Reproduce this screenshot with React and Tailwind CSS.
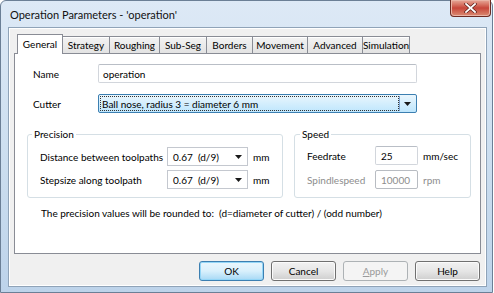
import React from 'react';

const tabs = [
  { label: 'General', w: 'w-[46px]' },
  { label: 'Strategy', w: 'w-[48px]' },
  { label: 'Roughing', w: 'w-[51px]' },
  { label: 'Sub-Seg', w: 'w-[48px]' },
  { label: 'Borders', w: 'w-[47px]' },
  { label: 'Movement', w: 'w-[56px]' },
  { label: 'Advanced', w: 'w-[56px]' },
  { label: 'Simulation', w: 'w-[48px]' },
];

const Arrow = () => (
  <svg width="7" height="4" viewBox="0 0 7 4" className="shrink-0">
    <path d="M0 0h7L3.5 4z" fill="#1a1a1a" />
  </svg>
);

const Combo = ({ value }) => (
  <div className="flex h-[19px] w-[81px] items-center justify-between border border-[#c4c8cf] bg-white pl-[5px] pr-[5px]">
    <span className="whitespace-pre">{value}</span>
    <Arrow />
  </div>
);

const Button = ({ children, primary, disabled }) => {
  if (disabled) {
    return (
      <div className="flex h-[20px] w-[65px] items-center justify-center rounded-[3px] border border-[#adb2b5] bg-[#f4f4f4] text-[#9a9a9a]">
        <span><span className="underline">A</span>pply</span>
      </div>
    );
  }
  return (
    <div
      className={
        'flex h-[20px] w-[65px] items-center justify-center rounded-[3px] border ' +
        (primary
          ? 'border-[#3c7fb1] bg-gradient-to-b from-[#eaf6fd] via-[#d9f0fc] to-[#a7d9f5] shadow-[inset_0_0_0_1px_#94d6f7]'
          : 'border-[#707070] bg-gradient-to-b from-[#f2f2f2] via-[#e6e6e6] to-[#cfcfcf] shadow-[inset_0_0_0_1px_#fbfbfb]')
      }
    >
      {children}
    </div>
  );
};

export default function App() {
  return (
    <div className="h-[293px] w-[494px] whitespace-nowrap bg-white font-['Lato',sans-serif] text-[10px] leading-[12px] text-black">
      <div className="flex h-[293px] w-[493px] flex-col rounded-t-[6px] border border-[#6b7f96] bg-gradient-to-b from-[#dde9f6] via-[#cddff0] to-[#bdd3ea] pb-[5px] pl-[7px] pr-[5px]">
        {/* title bar */}
        <div className="flex h-[26px] shrink-0 items-start justify-between">
          <div className="pl-[2px] pt-[7px] text-[11px] leading-[13px] text-[#111]">
            Operation Parameters - 'operation'
          </div>
          <div className="-mr-[4px] -mt-px flex h-[17px] w-[41px] items-center justify-center rounded-b-[4px] border border-t-0 border-[#6d2a22] bg-gradient-to-b from-[#e6a99a] via-[#c7453a] to-[#d98a72] shadow-[inset_0_0_0_1px_#eab4a6]">
            <svg width="13" height="10" viewBox="0 0 13 10">
              <path d="M2 1l9 8M11 1l-9 8" stroke="#5a1e18" strokeWidth="3.2" strokeLinecap="square" />
              <path d="M2 1l9 8M11 1l-9 8" stroke="#ffffff" strokeWidth="1.8" strokeLinecap="square" />
            </svg>
          </div>
        </div>

        {/* client */}
        <div className="flex flex-1 flex-col border border-[#8fa3b8] bg-[#f0f0f0] pl-[5px] pr-[6px] pt-[5px] shadow-[inset_0_0_0_1px_#ffffff]">
          {/* tabs */}
          <div className="flex h-[20px] items-end pl-[3px]">
            {tabs.map((t, i) =>
              i === 0 ? (
                <div
                  key={t.label}
                  className={`relative z-10 -mb-px flex h-[20px] ${t.w} items-center justify-center border border-b-0 border-[#898c95] bg-white pb-[1px]`}
                >
                  {t.label}
                </div>
              ) : (
                <div
                  key={t.label}
                  className={`-ml-px flex h-[17px] ${t.w} items-center justify-center border border-b-0 border-[#898c95] bg-gradient-to-b from-[#f3f3f3] to-[#e3e3e3] shadow-[inset_0_1px_0_#ffffff]`}
                >
                  {t.label}
                </div>
              )
            )}
          </div>

          {/* panel */}
          <div className="h-[201px] w-[467px] border border-[#898c95] bg-white pt-[10px]">
            <div className="flex h-[19px] items-center">
              <div className="w-[83px] pl-[18px]">Name</div>
              <div className="flex h-[19px] w-[319px] items-center rounded-[2px] border border-[#d2d6dc] border-t-[#b9bec6] pl-[4px]">
                operation
              </div>
            </div>
            <div className="mt-[11px] flex h-[19px] items-center">
              <div className="w-[83px] pl-[18px]">Cutter</div>
              <div className="flex h-[19px] w-[319px] items-stretch rounded-[2px] border border-[#3c7fb1] bg-gradient-to-b from-[#eaf6fd] to-[#bee6fd] p-[1px]">
                <div className="flex flex-1 items-center border border-dotted border-[#333] pl-[1px]">
                  Ball nose, radius 3 = diameter 6 mm
                </div>
                <div className="flex w-[16px] items-center justify-center border-l border-[#7da2ce]">
                  <Arrow />
                </div>
              </div>
            </div>

            <div className="mt-[15px] flex gap-[11px] pl-[12px]">
              <fieldset className="h-[70px] w-[256px] rounded-[3px] border border-[#d5dfe5]">
                <legend className="ml-[4px] px-[2px]">Precision</legend>
                <div className="mt-[7px] flex h-[19px] items-center pl-[12px]">
                  <div className="w-[127px]">Distance between toolpaths</div>
                  <Combo value="0.67  (d/9)" />
                  <div className="pl-[5px]">mm</div>
                </div>
                <div className="mt-[4px] flex h-[19px] items-center pl-[12px]">
                  <div className="w-[127px]">Stepsize along toolpath</div>
                  <Combo value="0.67  (d/9)" />
                  <div className="pl-[5px]">mm</div>
                </div>
              </fieldset>
              <fieldset className="h-[70px] w-[177px] rounded-[3px] border border-[#d5dfe5]">
                <legend className="ml-[5px] px-[2px]">Speed</legend>
                <div className="mt-[6px] flex h-[19px] items-center pl-[12px]">
                  <div className="w-[68px]">Feedrate</div>
                  <div className="flex h-[19px] w-[43px] items-center rounded-[2px] border border-[#d2d6dc] border-t-[#b9bec6] pl-[5px]">
                    25
                  </div>
                  <div className="pl-[5px]">mm/sec</div>
                </div>
                <div className="mt-[5px] flex h-[19px] items-center pl-[12px] text-[#8d8d8d]">
                  <div className="w-[68px]">Spindlespeed</div>
                  <div className="flex h-[19px] w-[43px] items-center rounded-[2px] border border-[#b8bcc2] pl-[5px]">
                    10000
                  </div>
                  <div className="pl-[5px]">rpm</div>
                </div>
              </fieldset>
            </div>

            <div className="mt-[9px] whitespace-pre pl-[26px]">
              The precision values will be rounded to:  (d=diameter of cutter) / (odd number)
            </div>
          </div>

          {/* buttons */}
          <div className="mt-[7px] flex justify-end gap-[7px]">
            <Button primary>OK</Button>
            <Button>Cancel</Button>
            <Button disabled>Apply</Button>
            <Button>Help</Button>
          </div>
        </div>
      </div>
    </div>
  );
}
